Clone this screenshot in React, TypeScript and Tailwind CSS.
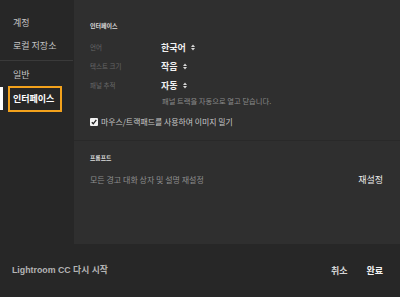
import React from 'react';

const font = { fontFamily: '"Noto Sans CJK KR", "Noto Sans", sans-serif' };

function UpDown() {
  return (
    <svg width="4" height="7" viewBox="0 0 4 7" className="ml-[5px]">
      <path d="M0 3 L2 0.5 L4 3 Z" fill="#d8d8d8" />
      <path d="M0 4 L2 6.5 L4 4 Z" fill="#d8d8d8" />
    </svg>
  );
}

function Row({ label, value }: { label: string; value: string }) {
  return (
    <div className="flex items-center h-[19px]">
      <span className="w-[71px] text-[6.5px] text-[#676767]">{label}</span>
      <span className="flex items-center text-[9px] font-bold text-[#f0f0f0]">
        {value}
        <UpDown />
      </span>
    </div>
  );
}

export default function App() {
  return (
    <div className="w-[400px] h-[297px] flex flex-col bg-[#272727] overflow-hidden" style={font}>
      <div className="flex h-[244px]">
        {/* sidebar */}
        <div className="w-[74px] shrink-0 flex flex-col pt-[15px]">
          <div className="h-[16px] flex items-center pl-[13px] text-[9px] text-[#c4c4c4]">계정</div>
          <div className="h-[16px] mt-[7px] flex items-center pl-[13px] text-[9px] text-[#c4c4c4]">로컬 저장소</div>
          <div className="h-px bg-[#3a3a3a] mt-[6px] mr-[1px]" />
          <div className="h-[16px] mt-[6px] flex items-center pl-[13px] text-[9px] text-[#c4c4c4]">일반</div>
          <div className="relative mt-[3px] h-[26px] flex items-center">
            <div className="absolute left-0 top-[1px] w-[3px] h-[23px] bg-white" />
            <div className="ml-[8px] w-[54px] h-[26px] border-2 border-[#f3a21c] flex items-center pl-[3px] text-[9px] font-bold text-white">
              인터페이스
            </div>
          </div>
        </div>
        {/* main panel */}
        <div className="flex-1 bg-[#2f2f2f] flex flex-col">
          <div className="pl-[16px] pt-[21px] h-[140px]">
            <div className="h-[8px] flex items-center text-[6px] font-bold text-[#dcdcdc]">인터페이스</div>
            <div className="mt-[9px]">
              <Row label="언어" value="한국어" />
              <Row label="텍스트 크기" value="작음" />
              <Row label="패널 추적" value="자동" />
            </div>
            <div className="h-[12px] flex items-center pl-[72px] text-[7.3px] text-[#8a8a8a]">
              패널 트랙을 자동으로 열고 닫습니다.
            </div>
            <div className="mt-[10px] h-[10px] flex items-center">
              <svg width="8" height="8" viewBox="0 0 8 8">
                <rect x="0" y="0" width="8" height="8" rx="1" fill="#f2f2f2" />
                <path d="M1.8 4.2 L3.3 5.8 L6.3 1.8" stroke="#222" strokeWidth="1.3" fill="none" />
              </svg>
              <span className="ml-[3px] text-[7.9px] text-[#c8c8c8]">마우스/트랙패드를 사용하여 이미지 밀기</span>
            </div>
          </div>
          <div className="h-px bg-[#292929]" />
          <div className="pl-[16px] pr-[17px] pt-[13px]">
            <div className="h-[8px] flex items-center text-[5.8px] font-bold text-[#dcdcdc]">프롬프트</div>
            <div className="mt-[11px] h-[14px] flex items-center justify-between">
              <span className="text-[8px] text-[#8e8e8e]">모든 경고 대화 상자 및 설명 재설정</span>
              <span className="text-[9px] text-[#ededed]">재설정</span>
            </div>
          </div>
        </div>
      </div>
      {/* footer */}
      <div className="flex-1 flex items-center justify-between pl-[12px] pr-[17px] pt-[1px]">
        <span className="text-[8.8px] font-bold text-[#b4b4b4]" style={{ fontFamily: '"Liberation Sans", "Noto Sans CJK KR", sans-serif' }}>
          Lightroom CC 다시 시작
        </span>
        <div className="flex items-center gap-[19px]">
          <span className="text-[9px] font-bold text-[#d4d4d4]">취소</span>
          <span className="text-[9px] font-bold text-[#f4f4f4]">완료</span>
        </div>
      </div>
    </div>
  );
}
